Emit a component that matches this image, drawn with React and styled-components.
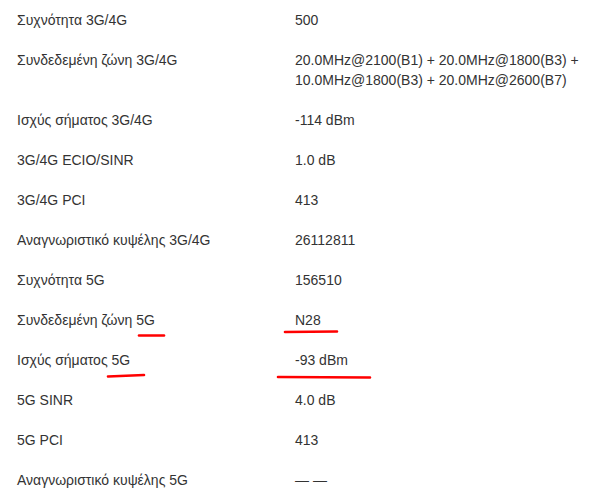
import styled, { createGlobalStyle } from 'styled-components'

const GlobalStyle = createGlobalStyle`
    body {
        margin: 0;
        background: #fff;
    }
`

const Page = styled.div`
    position: relative;
    width: 616px;
    padding: 0 16px 0 17px;
    box-sizing: border-box;
    font-family: "Liberation Sans", Arial, sans-serif;
    font-size: 14px;
    line-height: 20px;
    color: #333;
`
const Row = styled.div`
    display: grid;
    grid-template-columns: 278px 1fr;
    padding: 10px 0;
`
const Label = styled.div``
const Value = styled.div``

const Marks = styled.svg`
    position: absolute;
    left: 0;
    top: 0;
    pointer-events: none;
`

const rows = [
    ['Συχνότητα 3G/4G', '500'],
    ['Συνδεδεμένη ζώνη 3G/4G', '20.0MHz@2100(B1) + 20.0MHz@1800(B3) + 10.0MHz@1800(B3) + 20.0MHz@2600(B7)'],
    ['Ισχύς σήματος 3G/4G', '-114 dBm'],
    ['3G/4G ECIO/SINR', '1.0 dB'],
    ['3G/4G PCI', '413'],
    ['Αναγνωριστικό κυψέλης 3G/4G', '26112811'],
    ['Συχνότητα 5G', '156510'],
    ['Συνδεδεμένη ζώνη 5G', 'N28'],
    ['Ισχύς σήματος 5G', '-93 dBm'],
    ['5G SINR', '4.0 dB'],
    ['5G PCI', '413'],
    ['Αναγνωριστικό κυψέλης 5G', '— —'],
]

const App = () => {
    return (
        <Page>
            <GlobalStyle/>
            {rows.map(([label, value]) => (
                <Row key={label}>
                    <Label>{label}</Label>
                    <Value>{value}</Value>
                </Row>
            ))}

            {/* hand drawn red underlines */}
            <Marks width="616" height="492" viewBox="0 0 616 492">
                <g stroke="#f00" strokeWidth="2.6" strokeLinecap="round" fill="none">
                    <path d="M139 335.5 L164 335.5"/>
                    <path d="M285 332 L337 331.5"/>
                    <path d="M108 376.5 L144 375"/>
                    <path d="M278 377 L370 377.5"/>
                </g>
            </Marks>
        </Page>
    )
}

export default App
